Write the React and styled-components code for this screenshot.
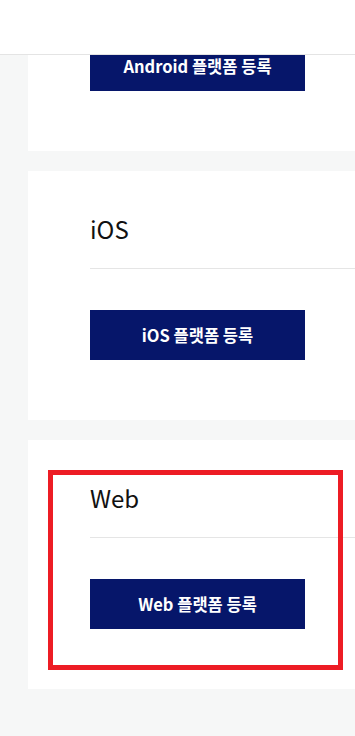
import React from "react";
import styled, { createGlobalStyle } from "styled-components";

const Global = createGlobalStyle`
  html, body { margin: 0; padding: 0; }
  body {
    background: #f6f7f7;
    font-family: "Noto Sans CJK KR", "Noto Sans", sans-serif;
    overflow: hidden;
  }
`;

const Header = styled.header`
  position: fixed;
  top: 0;
  left: 0;
  right: 0;
  height: 54px;
  background: #ffffff;
  border-bottom: 1px solid #e4e4e4;
  z-index: 10;
`;

const Main = styled.main`
  display: flex;
  flex-direction: column;
  gap: 20px;
  padding-left: 28px;
  margin-top: -98px;
  padding-bottom: 60px;
`;

const Card = styled.section`
  position: relative;
  background: #ffffff;
  padding: 40px 0 60px 62px;
  display: flex;
  flex-direction: column;
`;

const Title = styled.h2`
  margin: 0;
  font-size: 24px;
  line-height: 36px;
  font-weight: 400;
  color: #111111;
  padding-bottom: 21px;
  border-bottom: 1px solid #e5e5e5;
`;

const RegisterButton = styled.button`
  margin-top: 41px;
  width: 215px;
  height: 50px;
  border: none;
  background: #06166a;
  color: #ffffff;
  font-family: "Noto Sans CJK KR", "Noto Sans", sans-serif;
  font-size: 16.5px;
  font-weight: 700;
  cursor: pointer;
  padding: 0;
`;

const Highlight = styled.div`
  position: absolute;
  left: 20px;
  top: 30px;
  width: 295px;
  height: 200px;
  box-sizing: border-box;
  border: 5px solid #ed1c24;
  pointer-events: none;
`;

const platforms = [
  { name: "Android" },
  { name: "iOS" },
  { name: "Web", highlight: true },
];

export default function App() {
  return (
    <>
      <Global />
      <Header />
      <Main>
        {platforms.map((p) => (
          <Card key={p.name}>
            <Title>{p.name}</Title>
            <RegisterButton>{p.name} 플랫폼 등록</RegisterButton>
            {p.highlight && <Highlight />}
          </Card>
        ))}
      </Main>
    </>
  );
}
